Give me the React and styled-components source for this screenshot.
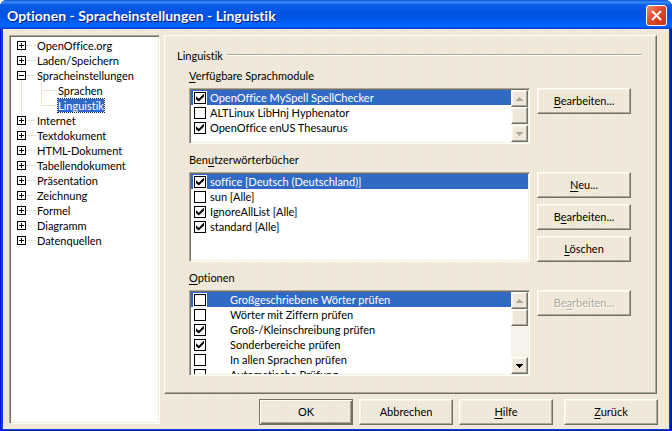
import React from "react";
import styled, { createGlobalStyle, css } from "styled-components";

const face = "#efe8da";
const light = "#fffffa";
const mid = "#aca899";
const dark = "#716f64";
const select = "#316ac5";

const Global = createGlobalStyle`
  * { box-sizing: border-box; }
  body {
    margin: 0;
    background: #fff;
    color: #000;
    font: 11px/15px Lato, "Open Sans", sans-serif;
    font-variant-ligatures: none;
  }
  button, input { font: inherit; color: inherit; margin: 0; padding: 0; }
  u { text-decoration: underline; text-underline-offset: 2px; text-decoration-thickness: 1px; text-decoration-skip-ink: none; }
`;

const Dialog = styled.div`
  display: flex;
  flex-direction: column;
  min-height: 100vh;
  overflow: hidden;
  background: #0a3fd8;
  border-radius: 7px 7px 0 0;
  box-shadow: inset 1px 0 #0019cf, inset -1px -1px #00138c, inset -2px -2px #0020b8;
  padding: 0 3px 3px;
`;

const TitleBar = styled.header`
  display: flex;
  align-items: center;
  justify-content: space-between;
  height: 29px;
  margin: 0 -3px;
  padding: 2px 5px 0 7px;
  background: linear-gradient(#0a4fd0 0, #3b8ef8 2px, #0a5be8 5px, #0053e1 12px, #0054e6 18px, #0066ff 25px, #005bf0 27px, #003dd0 29px);
`;

const Title = styled.h1`
  margin: 0;
  color: #fff;
  font-size: 14px;
  font-weight: 700;
  line-height: 20px;
  white-space: nowrap;
  text-shadow: 1px 1px #0a1883;
`;

const CloseButton = styled.button`
  display: flex;
  align-items: center;
  justify-content: center;
  width: 21px;
  height: 21px;
  border: 1px solid #fff;
  border-radius: 3px;
  background: linear-gradient(135deg, #ee8f78, #e0482a 45%, #c83414);
`;

const Content = styled.main`
  flex: 1;
  display: grid;
  grid-template-columns: 151px minmax(0, 1fr);
  column-gap: 4px;
  padding: 6px 11px 4px 6px;
  background-color: ${face};
  background-image: repeating-linear-gradient(90deg, rgba(255, 250, 225, 0.2) 0 1px, rgba(238, 214, 200, 0.1) 1px 3px);
`;

const sunken = css`
  background: #fff;
  border: 1px solid;
  border-color: ${mid} ${light} ${light} ${mid};
  box-shadow: inset 1px 1px ${dark}, inset -1px -1px #f1efe2;
`;

const raised = css`
  border: 1px solid;
  border-color: ${light} ${dark} ${dark} ${light};
  box-shadow: inset -1px -1px ${mid}, inset 1px 1px #f8f4e8;
`;

const Tree = styled.ul`
  ${sunken}
  margin: 0 0 1px;
  padding: 2px 0 0 7px;
  list-style: none;
`;

const Branch = styled.li`
  position: relative;
  &:not(:last-child)::before {
    content: "";
    position: absolute;
    left: 4px;
    top: 12px;
    bottom: -3px;
    border-left: 1px solid #ece4d2;
  }
`;

const Node = styled.div`
  display: flex;
  align-items: center;
  height: 15px;
  white-space: nowrap;
`;

const Stem = styled.span`
  width: ${(p) => (p.$long ? 16 : 10)}px;
  margin-right: 1px;
  border-top: 1px solid #ece4d2;
`;

const Expander = styled.button`
  display: flex;
  width: 9px;
  height: 9px;
  border: 0;
  background: #fff;
`;

const Children = styled.ul`
  position: relative;
  margin: 0 0 0 24px;
  padding: 0;
  list-style: none;
  &::before {
    content: "";
    position: absolute;
    left: 0;
    top: 0;
    height: 23px;
    border-left: 1px solid #ece4d2;
  }
`;

const Leaf = styled.span`
  line-height: 13px;
  outline: ${(p) => (p.$selected ? "1px dotted #0a246a" : "0")};
  background: ${(p) => (p.$selected ? select : "transparent")};
  color: ${(p) => (p.$selected ? "#fff" : "inherit")};
`;

const Right = styled.div`
  display: flex;
  flex-direction: column;
  gap: 5px;
`;

const Panel = styled.section`
  margin-right: 1px;
  border: 1px solid;
  border-color: ${light} ${dark} ${dark} ${light};
  box-shadow: inset -1px -1px ${mid};
  padding: 11px 14px 17px 12px;
`;

const Heading = styled.h2`
  display: flex;
  align-items: center;
  gap: 4px;
  height: 16px;
  margin: 0 0 5px;
  font-size: 11px;
  font-weight: 400;
  &::after {
    content: "";
    flex: 1;
    border-top: 1px solid ${mid};
    border-bottom: 1px solid ${light};
  }
`;

const Group = styled.div`
  display: grid;
  grid-template-columns: minmax(0, 1fr) 94px;
  column-gap: 7px;
  row-gap: 4px;
  margin: 0 11px 8px 12px;
  &:last-child { margin-bottom: 0; }
`;

const GroupLabel = styled.div`
  grid-column: 1 / -1;
  height: 16px;
  line-height: 16px;
`;

const ListBox = styled.div`
  ${sunken}
  display: flex;
  height: ${(p) => p.$height}px;
  padding: 1px;
  overflow: hidden;
`;

const Rows = styled.div`
  flex: 1;
  overflow: hidden;
`;

const Row = styled.label`
  display: flex;
  align-items: center;
  gap: ${(p) => (p.$wide ? 24 : 4)}px;
  height: 15px;
  padding-left: 3px;
  white-space: nowrap;
  background: ${(p) => (p.$selected ? select : "transparent")};
  color: ${(p) => (p.$selected ? "#fff" : "inherit")};
`;

const Check = styled.input`
  appearance: none;
  position: relative;
  width: 12px;
  height: 12px;
  border: 1px solid #000;
  background: #fff;
  box-shadow: 0 0 0 1px #fff;
  &:checked::before {
    content: "";
    display: block;
    width: 8px;
    height: 8px;
    margin: 1px;
    background: #000;
    clip-path: polygon(0 35%, 35% 65%, 100% 0, 100% 36%, 35% 100%, 0 72%);
  }
`;

const Bar = styled.div`
  display: flex;
  flex-direction: column;
  justify-content: space-between;
  width: 17px;
  background: #f8f3ea;
`;

const BarEnd = styled.button`
  ${raised}
  display: flex;
  align-items: center;
  justify-content: center;
  width: 100%;
  height: 17px;
  background: ${face};
  color: ${(p) => (p.disabled ? mid : "#000")};
`;

const Thumb = styled.div`
  ${raised}
  height: 17px;
  background: ${face};
`;

const Buttons = styled.div`
  display: flex;
  flex-direction: column;
  gap: 6px;
`;

const PushButton = styled.button`
  ${raised}
  width: 94px;
  height: 26px;
  line-height: 22px;
  background: transparent;
  text-align: center;
  ${(p) => p.$primary && css`
    border-color: ${dark};
    box-shadow: inset 1px 1px ${light}, inset -1px -1px ${dark}, inset -2px -2px ${mid};
  `}
  &:disabled { color: ${mid}; text-shadow: 1px 1px #fff; }
`;

const Footer = styled.footer`
  display: flex;
  justify-content: flex-end;
  gap: 6px;
  & > :last-child { margin-left: 5px; }
`;

function Arrow({ up }) {
  return (
    <svg width="7" height="4" viewBox="0 0 7 4" shapeRendering="crispEdges" fill="currentColor" aria-hidden="true">
      <path d={up ? "M3 0h1v1h1v1h1v1h1v1H0V3h1V2h1V1h1z" : "M0 0h7v1H6v1H5v1H4v1H3V3H2V2H1V1H0z"} />
    </svg>
  );
}

function ScrollBar({ endDisabled }) {
  return (
    <Bar>
      <div>
        <BarEnd type="button" disabled aria-label="Nach oben">
          <Arrow up />
        </BarEnd>
        <Thumb />
      </div>
      <BarEnd type="button" disabled={endDisabled} aria-label="Nach unten">
        <Arrow />
      </BarEnd>
    </Bar>
  );
}

function CheckList({ items, height, wide, scroll, endDisabled, labelId }) {
  return (
    <ListBox $height={height} role="group" aria-labelledby={labelId}>
      <Rows>
        {items.map(([text, checked], i) => (
          <Row key={text} $selected={i === 0} $wide={wide}>
            <Check type="checkbox" defaultChecked={checked} />
            {text}
          </Row>
        ))}
      </Rows>
      {scroll && <ScrollBar endDisabled={endDisabled} />}
    </ListBox>
  );
}

const tree = [
  ["OpenOffice.org"],
  ["Laden/Speichern"],
  ["Spracheinstellungen", ["Sprachen", "Linguistik"]],
  ["Internet"],
  ["Textdokument"],
  ["HTML-Dokument"],
  ["Tabellendokument"],
  ["Präsentation"],
  ["Zeichnung"],
  ["Formel"],
  ["Diagramm"],
  ["Datenquellen"],
];

const modules = [
  ["OpenOffice MySpell SpellChecker", true],
  ["ALTLinux LibHnj Hyphenator", false],
  ["OpenOffice enUS Thesaurus", true],
];

const dictionaries = [
  ["soffice [Deutsch (Deutschland)]", true],
  ["sun [Alle]", false],
  ["IgnoreAllList [Alle]", true],
  ["standard [Alle]", true],
];

const options = [
  ["Großgeschriebene Wörter prüfen", false],
  ["Wörter mit Ziffern prüfen", false],
  ["Groß-/Kleinschreibung prüfen", true],
  ["Sonderbereiche prüfen", true],
  ["In allen Sprachen prüfen", false],
  ["Automatische Prüfung", false],
];

export default function App() {
  return (
    <>
      <Global />
      <Dialog role="dialog" aria-labelledby="title">
        <TitleBar>
          <Title id="title">Optionen - Spracheinstellungen - Linguistik</Title>
          <CloseButton type="button" aria-label="Schließen">
            <svg width="13" height="13" viewBox="0 0 13 13" stroke="#fff" strokeWidth="2" aria-hidden="true">
              <path d="M2 2l9 9M11 2l-9 9" />
            </svg>
          </CloseButton>
        </TitleBar>
        <Content>
          <Tree>
            {tree.map(([name, children]) => (
              <Branch key={name}>
                <Node>
                  <Expander type="button" aria-label={name} aria-expanded={!!children}>
                    <svg width="9" height="9" viewBox="0 0 9 9" stroke="#000" fill="none" shapeRendering="crispEdges" aria-hidden="true">
                      <path d={children ? "M.5.5h8v8h-8zM2 4.5h5" : "M.5.5h8v8h-8zM2 4.5h5M4.5 2v5"} />
                    </svg>
                  </Expander>
                  <Stem />
                  {name}
                </Node>
                {children && (
                  <Children>
                    {children.map((c) => (
                      <li key={c}>
                        <Node>
                          <Stem $long />
                          <Leaf $selected={c === "Linguistik"}>{c}</Leaf>
                        </Node>
                      </li>
                    ))}
                  </Children>
                )}
              </Branch>
            ))}
          </Tree>
          <Right>
            <Panel>
              <Heading>Linguistik</Heading>
              <Group>
                <GroupLabel id="modules"><u>V</u>erfügbare Sprachmodule</GroupLabel>
                <CheckList items={modules} height={56} scroll endDisabled labelId="modules" />
                <Buttons>
                  <PushButton type="button"><u>B</u>earbeiten...</PushButton>
                </Buttons>
              </Group>
              <Group>
                <GroupLabel id="dictionaries">Ben<u>u</u>tzerwörterbücher</GroupLabel>
                <CheckList items={dictionaries} height={90} labelId="dictionaries" />
                <Buttons>
                  <PushButton type="button"><u>N</u>eu...</PushButton>
                  <PushButton type="button">B<u>e</u>arbeiten...</PushButton>
                  <PushButton type="button"><u>L</u>öschen</PushButton>
                </Buttons>
              </Group>
              <Group>
                <GroupLabel id="options"><u>O</u>ptionen</GroupLabel>
                <CheckList items={options} height={86} wide scroll labelId="options" />
                <Buttons>
                  <PushButton type="button" disabled>Be<u>a</u>rbeiten...</PushButton>
                </Buttons>
              </Group>
            </Panel>
            <Footer>
              <PushButton type="button" $primary>OK</PushButton>
              <PushButton type="button">Abbrechen</PushButton>
              <PushButton type="button"><u>H</u>ilfe</PushButton>
              <PushButton type="button"><u>Z</u>urück</PushButton>
            </Footer>
          </Right>
        </Content>
      </Dialog>
    </>
  );
}
